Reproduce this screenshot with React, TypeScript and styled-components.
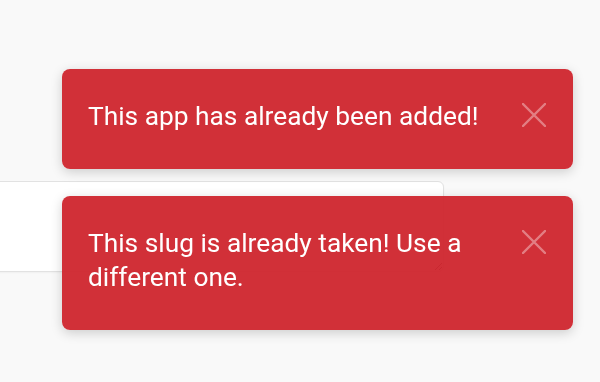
import * as React from "react";
import styled, { createGlobalStyle } from "styled-components";

const GlobalStyle = createGlobalStyle`
  html, body {
    margin: 0;
    padding: 0;
    background: #f9f9f9;
    font-family: Roboto, "Noto Sans", Arial, sans-serif;
  }
  * { box-sizing: border-box; }
`;

const Page = styled.div`
  width: 600px;
  height: 382px;
  overflow: hidden;
  padding-top: 181px;
`;

const Field = styled.textarea`
  display: block;
  width: 464px;
  height: 91px;
  margin-left: -20px;
  background: #ffffff;
  border: 1px solid #e2e2e2;
  border-radius: 6px;
  box-shadow: 0 1px 2px rgba(0, 0, 0, 0.04);
  outline: none;
  font-family: inherit;
  font-size: 16px;
`;

const ToastStack = styled.div`
  position: fixed;
  top: 69px;
  right: 27px;
  width: 511px;
  display: flex;
  flex-direction: column;
  gap: 27px;
`;

const Toast = styled.div`
  display: flex;
  align-items: flex-start;
  gap: 20px;
  padding: 30px 27px 35px 26px;
  background: rgba(207, 37, 45, 0.95);
  border-radius: 8px;
  box-shadow: 0 3px 12px rgba(0, 0, 0, 0.18);
`;

const Message = styled.div`
  flex: 1;
  color: #ffffff;
  font-size: 26.3px;
  line-height: 34.5px;
`;

const Close = styled.button`
  flex: none;
  width: 24px;
  height: 24px;
  margin-top: 4px;
  padding: 0;
  border: 0;
  background: none;
  cursor: pointer;
  color: rgba(255, 255, 255, 0.38);
  svg { display: block; }
`;

function CloseIcon() {
  return (
    <svg width="24" height="24" viewBox="0 0 24 24" fill="none" stroke="currentColor" strokeWidth="2.4" strokeLinecap="round">
      <path d="M1 1L23 23M23 1L1 23" />
    </svg>
  );
}

const messages = [
  "This app has already been added!",
  "This slug is already taken! Use a different one.",
];

export default function App() {
  return (
    <>
      <GlobalStyle />
      <Page>
        <Field />
      </Page>
      <ToastStack>
        {messages.map((m) => (
          <Toast key={m}>
            <Message>{m}</Message>
            <Close aria-label="Close">
              <CloseIcon />
            </Close>
          </Toast>
        ))}
      </ToastStack>
    </>
  );
}
